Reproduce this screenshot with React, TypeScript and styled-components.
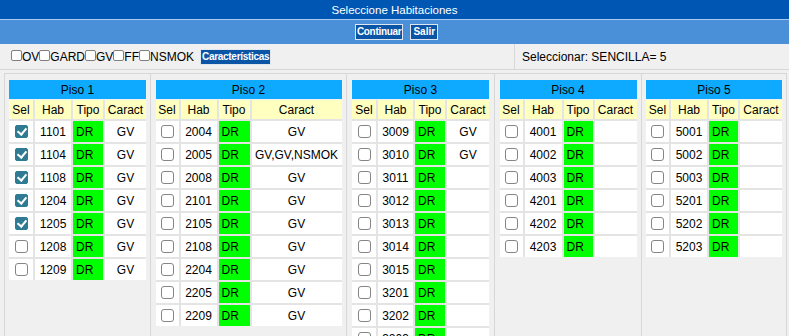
import React from 'react';
import styled, { createGlobalStyle } from 'styled-components';

const Global = createGlobalStyle`
  html, body { margin: 0; padding: 0; background: #f0f0f0; }
  body {
    font-family: "Liberation Sans", Arial, sans-serif;
    font-size: 12px;
    color: #000;
  }
  * { box-sizing: border-box; }
`;

const Page = styled.div`
  display: flex;
  flex-direction: column;
  min-height: 336px;
`;

const TitleBar = styled.div`
  height: 20px;
  background: #0057b3;
  border-bottom: 1px solid #a9c9ee;
  color: #fff;
  font-size: 11.5px;
  display: flex;
  align-items: center;
  justify-content: center;
`;

const ButtonBar = styled.div`
  height: 24px;
  background: #4a90d9;
  display: flex;
  align-items: center;
  justify-content: center;
  gap: 7px;
  padding-left: 4px;
`;

const BlueButton = styled.button<{ $tight?: boolean }>`
  height: 16px;
  padding: 0 ${(p) => (p.$tight ? '1px' : '2px')};
  margin: 0;
  border: 1px solid #dfe6ee;
  background: #0b55a6;
  color: #fff;
  font-family: "Liberation Sans", Arial, sans-serif;
  font-weight: bold;
  font-size: 10px;
  line-height: 14px;
  letter-spacing: ${(p) => (p.$tight ? '-0.3px' : '0')};
  cursor: pointer;
`;

const FilterRow = styled.div`
  height: 26px;
  display: flex;
  border-bottom: 1px solid #d7d7d7;
`;

const FilterCell = styled.div`
  width: 515px;
  border-right: 1px solid #d7d7d7;
  display: flex;
  align-items: center;
  padding-left: 11px;
`;

const SelectCell = styled.div`
  flex: 1;
  display: flex;
  align-items: center;
  padding-left: 7px;
`;

const OptionLabel = styled.label`
  display: inline-flex;
  align-items: center;
  font-size: 12px;
`;

const SmallBox = styled.input`
  appearance: none;
  width: 11px;
  height: 11px;
  margin: 0 0 2px 0;
  border: 1px solid #808080;
  border-radius: 2px;
  background: #fff;
`;

const CaracButton = styled(BlueButton)`
  margin-left: 6px;
  margin-top: 1px;
`;

const Floors = styled.div`
  margin: 3px 0 0 4px;
  display: flex;
  flex: 1;
  align-items: stretch;
`;

const FloorCell = styled.div<{ $w: number; $last?: boolean }>`
  width: ${(p) => p.$w}px;
  border-top: 1px solid #d7d7d7;
  border-left: 1px solid #d7d7d7;
  border-right: ${(p) => (p.$last ? '1px solid #d7d7d7' : 'none')};
  padding-top: 6px;
  display: flex;
  flex-direction: column;
  align-items: center;
`;

const FloorTable = styled.div`
  width: fit-content;
  display: flex;
  flex-direction: column;
`;

const FloorHeader = styled.div`
  height: 19px;
  margin-bottom: 1px;
  background: #0daaff;
  display: flex;
  align-items: center;
  justify-content: center;
  font-size: 12px;
`;

const Grid = styled.div<{ $cols: string }>`
  display: grid;
  grid-template-columns: ${(p) => p.$cols};
  gap: 2px;
  background: #e4e4e4;
`;

const HeadCell = styled.div`
  height: 19px;
  background: #ffffc0;
  display: flex;
  align-items: center;
  justify-content: center;
  white-space: nowrap;
`;

const Cell = styled.div<{ $green?: boolean; $left?: boolean }>`
  height: 21px;
  background: ${(p) => (p.$green ? '#00ff00' : '#fff')};
  display: flex;
  align-items: center;
  justify-content: ${(p) => (p.$left ? 'flex-start' : 'center')};
  padding-left: ${(p) => (p.$left ? '3px' : '0')};
  white-space: nowrap;
`;

const RoomBox = styled.input`
  appearance: none;
  width: 13px;
  height: 13px;
  margin: 0;
  border: 1px solid #858585;
  border-radius: 3px;
  background: #fff;
  position: relative;
  &:checked {
    background: #2e7b93;
    border-color: #2e7b93;
    border-radius: 2px;
  }
  &:checked::after {
    content: '';
    position: absolute;
    left: 3px;
    top: 0px;
    width: 4px;
    height: 7px;
    border-right: 2px solid #fff;
    border-bottom: 2px solid #fff;
    transform: rotate(40deg);
  }
`;

type Room = { hab: string; caract: string; checked?: boolean };
type Floor = { name: string; width: number; cols: string; rooms: Room[] };

const floors: Floor[] = [
  {
    name: 'Piso 1',
    width: 146,
    cols: '24px 36px 30px 41px',
    rooms: [
      { hab: '1101', caract: 'GV', checked: true },
      { hab: '1104', caract: 'GV', checked: true },
      { hab: '1108', caract: 'GV', checked: true },
      { hab: '1204', caract: 'GV', checked: true },
      { hab: '1205', caract: 'GV', checked: true },
      { hab: '1208', caract: 'GV' },
      { hab: '1209', caract: 'GV' },
    ],
  },
  {
    name: 'Piso 2',
    width: 196,
    cols: '23px 36px 31px 90px',
    rooms: [
      { hab: '2004', caract: 'GV' },
      { hab: '2005', caract: 'GV,GV,NSMOK' },
      { hab: '2008', caract: 'GV' },
      { hab: '2101', caract: 'GV' },
      { hab: '2105', caract: 'GV' },
      { hab: '2108', caract: 'GV' },
      { hab: '2204', caract: 'GV' },
      { hab: '2205', caract: 'GV' },
      { hab: '2209', caract: 'GV' },
    ],
  },
  {
    name: 'Piso 3',
    width: 148,
    cols: '24px 35px 30px 42px',
    rooms: [
      { hab: '3009', caract: 'GV' },
      { hab: '3010', caract: 'GV' },
      { hab: '3011', caract: '' },
      { hab: '3012', caract: '' },
      { hab: '3013', caract: '' },
      { hab: '3014', caract: '' },
      { hab: '3015', caract: '' },
      { hab: '3201', caract: '' },
      { hab: '3202', caract: '' },
      { hab: '3203', caract: '' },
      { hab: '3204', caract: '' },
    ],
  },
  {
    name: 'Piso 4',
    width: 147,
    cols: '23px 37px 29px 42px',
    rooms: [
      { hab: '4001', caract: '' },
      { hab: '4002', caract: '' },
      { hab: '4003', caract: '' },
      { hab: '4201', caract: '' },
      { hab: '4202', caract: '' },
      { hab: '4203', caract: '' },
    ],
  },
  {
    name: 'Piso 5',
    width: 146,
    cols: '23px 36px 29px 42px',
    rooms: [
      { hab: '5001', caract: '' },
      { hab: '5002', caract: '' },
      { hab: '5003', caract: '' },
      { hab: '5201', caract: '' },
      { hab: '5202', caract: '' },
      { hab: '5203', caract: '' },
    ],
  },
];

const options = ['OV', 'GARD', 'GV', 'FF', 'NSMOK'];

export default function App() {
  return (
    <Page>
      <Global />
      <TitleBar>Seleccione Habitaciones</TitleBar>
      <ButtonBar>
        <BlueButton $tight>Continuar</BlueButton>
        <BlueButton>Salir</BlueButton>
      </ButtonBar>
      <FilterRow>
        <FilterCell>
          {options.map((o) => (
            <OptionLabel key={o}>
              <SmallBox type="checkbox" />
              {o}
            </OptionLabel>
          ))}
          <CaracButton $tight>Características</CaracButton>
        </FilterCell>
        <SelectCell>Seleccionar: SENCILLA= 5</SelectCell>
      </FilterRow>
      <Floors>
        {floors.map((f, i) => (
          <FloorCell key={f.name} $w={f.width} $last={i === floors.length - 1}>
            <FloorTable>
              <FloorHeader>{f.name}</FloorHeader>
              <Grid $cols={f.cols}>
                <HeadCell>Sel</HeadCell>
                <HeadCell>Hab</HeadCell>
                <HeadCell>Tipo</HeadCell>
                <HeadCell>Caract</HeadCell>
                {f.rooms.map((r) => (
                  <React.Fragment key={r.hab}>
                    <Cell>
                      <RoomBox type="checkbox" defaultChecked={!!r.checked} />
                    </Cell>
                    <Cell>{r.hab}</Cell>
                    <Cell $green $left>DR</Cell>
                    <Cell>{r.caract}</Cell>
                  </React.Fragment>
                ))}
              </Grid>
            </FloorTable>
          </FloorCell>
        ))}
      </Floors>
    </Page>
  );
}
